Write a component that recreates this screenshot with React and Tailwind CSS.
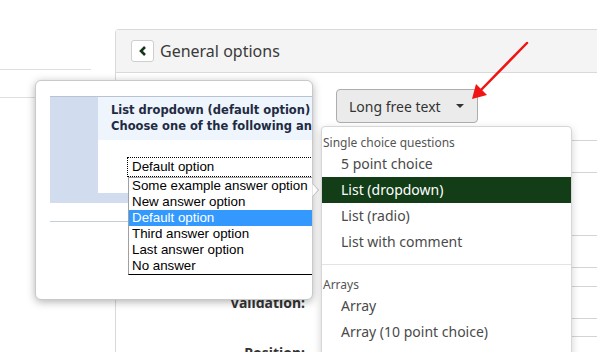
import React from 'react';

// labels of the first rows sit under the preview popup, so they stay empty
const formRows = [
  { label: '', gap: 'mt-0', kind: 'button' },
  { label: '', gap: 'mt-[17px]', kind: 'input' },
  { label: '', gap: 'mt-[62px]', kind: 'input' },
  { label: 'Validation:', gap: 'mt-[18px]', kind: 'input' },
  { label: 'Position:', gap: 'mt-[17px]', kind: 'input' },
];

const answerOptions = [
  'Some example answer option',
  'New answer option',
  'Default option',
  'Third answer option',
  'Last answer option',
  'No answer',
];

const menuGroups = [
  {
    title: 'Single choice questions',
    items: ['5 point choice', 'List (dropdown)', 'List (radio)', 'List with comment'],
  },
  {
    title: 'Arrays',
    items: ['Array', 'Array (10 point choice)'],
  },
];

export default function App() {
  return (
    <div className="relative w-[597px] h-[352px] overflow-hidden bg-white font-['Noto_Sans',sans-serif] text-[#333]">
      <div className="flex h-full">
        {/* sidebar remnants */}
        <aside className="w-[115px] shrink-0 pt-[69px] pr-[24px]">
          <div className="border-t border-[#dedede] h-[28px]" />
          <div className="border-t border-[#dedede]" />
        </aside>

        {/* main panel */}
        <main className="mt-[29px] w-[600px] shrink-0 border-l border-t border-[#d9d9d9] rounded-tl-[4px]">
          <div className="h-[43px] flex items-center gap-[6px] px-[15px] bg-[#f4f4f4] border-b border-[#d9d9d9]">
            <div className="w-[23px] h-[22px] flex items-center justify-center bg-white border border-[#cfcfcf] rounded-[3px]">
              <svg width="10" height="12" viewBox="0 0 10 12">
                <path d="M7 2 L3 6 L7 10" fill="none" stroke="#173619" strokeWidth="2.6" />
              </svg>
            </div>
            <span className="text-[16px] text-[#3a3a3a]">General options</span>
          </div>

          <div className="pt-[16px]">
            {formRows.map((row, i) => (
              <div key={i} className={`flex items-center gap-[31px] ${row.gap}`}>
                <div className="w-[189px] shrink-0 text-right text-[14px] font-bold text-[#333]">{row.label}</div>
                {row.kind === 'button' ? (
                  <div className="w-[142px] h-[34px] flex items-center pl-[12px] pr-[13px] bg-[#ebebeb] border border-[#adadad] rounded-[4px] text-[14px] text-[#333]">
                    <span>Long free text</span>
                    <span className="ml-auto w-0 h-0 border-x-[4px] border-t-[4px] border-x-transparent border-t-[#333]" />
                  </div>
                ) : (
                  <div className="w-[300px] h-[33px] border border-[#d4d4d4] rounded-[3px] bg-white" />
                )}
              </div>
            ))}
          </div>
        </main>
      </div>

      {/* question preview popup */}
      <div className="absolute left-[35px] top-[80px] w-[278px] h-[220px] overflow-hidden bg-white border border-[#c9c9c9] rounded-[6px] shadow-[0_2px_8px_rgba(0,0,0,0.3)] pl-[14px] pt-[15px]">
        <div className="w-[320px] border-t border-[#b9c3d2] bg-[#d1ddef] flex">
          <div className="w-[48px] shrink-0" />
          <div className="flex-1 pb-[10px]">
            <div className="h-[43px] bg-[#eef5fd] pl-[13px] pt-[5px] font-['DejaVu_Sans',sans-serif] font-bold text-[11.5px] leading-[16px] text-[#1f2b42] whitespace-nowrap">
              <div>List dropdown (default option)</div>
              <div>Choose one of the following answers</div>
            </div>
            <div className="h-[53px] bg-white pt-[17px] pl-[29px]">
              <div className="relative w-[200px] h-[20px] border border-dotted border-black font-['Liberation_Sans',sans-serif] text-[13.33px] leading-[18px] text-black pl-[4px]">
                Default option
                <div className="absolute left-0 top-[19px] w-[200px] bg-white border-l border-t border-[#a0a0a0] border-b border-b-black z-10">
                  {answerOptions.map((opt) => (
                    <div
                      key={opt}
                      className={`h-[16px] leading-[16px] pl-[3px] whitespace-nowrap ${opt === 'Default option' ? 'bg-[#3399ff] text-white' : 'text-black'}`}
                    >
                      {opt}
                    </div>
                  ))}
                </div>
              </div>
            </div>
          </div>
        </div>
        <div className="w-[320px] mt-[18px] border-t border-[#c6ced8]" />
      </div>

      {/* popup pointer */}
      <svg className="absolute left-[312px] top-[183px]" width="8" height="14" viewBox="0 0 8 14">
        <path d="M0.5 0.5 L6.5 7 L0.5 13.5" fill="#fff" stroke="#bdbdbd" strokeWidth="1" />
      </svg>

      {/* question type menu */}
      <div className="absolute left-[321px] top-[126px] w-[251px] h-[240px] bg-white border border-[#d6d6d6] rounded-[4px] shadow-[0_3px_8px_rgba(0,0,0,0.18)] pt-[7px]">
        {menuGroups.map((group, gi) => (
          <div key={group.title} className={gi > 0 ? 'border-t border-[#e3e3e3] mt-[9px] pt-[11px]' : ''}>
            <div className="h-[17px] leading-[17px] text-[12px] text-[#555] pl-[1px]">{group.title}</div>
            {group.items.map((item) => (
              <div
                key={item}
                className={`h-[26px] leading-[26px] pl-[19px] text-[14px] ${item === 'List (dropdown)' ? 'bg-[#123d17] text-white' : 'text-[#4a4a4a]'}`}
              >
                {item}
              </div>
            ))}
          </div>
        ))}
      </div>

      {/* red annotation arrow */}
      <svg className="absolute inset-0 pointer-events-none" width="597" height="352" viewBox="0 0 597 352">
        <line x1="527" y1="43" x2="479" y2="92" stroke="#f01414" strokeWidth="2.5" strokeLinecap="round" />
        <polygon points="472,99 476,84 487,95" fill="#f01414" />
      </svg>
    </div>
  );
}
